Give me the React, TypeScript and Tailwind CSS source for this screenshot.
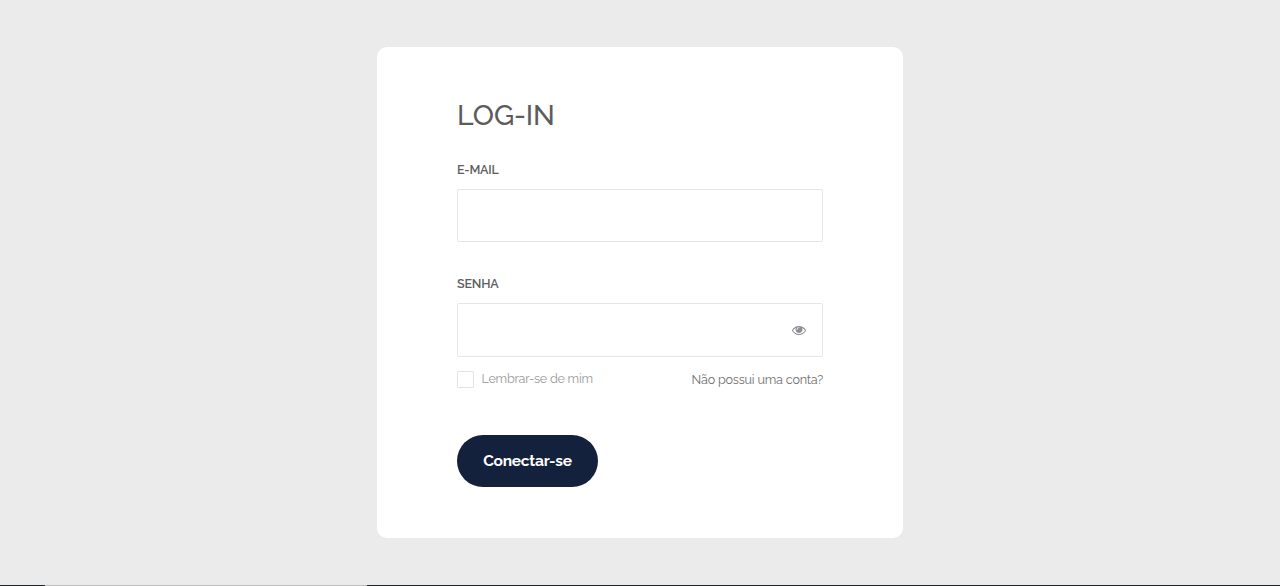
const EyeIcon = () => (
  <svg viewBox="0 0 1792 1792" className="h-3.5 w-3.5 fill-[#8c9094]" aria-hidden="true">
    <path d="M1664 960q-152-236-381-353 61 104 61 225 0 185-131.5 316.5t-316.5 131.5-316.5-131.5-131.5-316.5q0-121 61-225-229 117-381 353 133 205 333.5 326.5t434.5 121.5 434.5-121.5 333.5-326.5zm-720-384q0-20-14-34t-34-14q-125 0-214.5 89.5t-89.5 214.5q0 20 14 34t34 14 34-14 14-34q0-86 61-147t147-61q20 0 34-14t14-34zm848 384q0 34-20 69-140 230-376.5 368.5t-499.5 138.5-499.5-139-376.5-368q-20-35-20-69t20-69q140-229 376.5-368t499.5-139 499.5 139 376.5 368q20 35 20 69z" />
  </svg>
);

export default function App() {
  return (
    <div className="flex h-[586px] w-full flex-col bg-[#ebebeb] font-[Raleway,Lato,sans-serif]">
      <main className="flex flex-1 justify-center pt-[47px]">
        <form className="flex h-[491px] w-[526px] flex-col rounded-[10px] bg-white px-20 pt-[50px]">
          <h1 className="h-9 whitespace-nowrap text-[28.4px] font-medium leading-[37px] tracking-[-0.15px] text-[#5c5c5c]">LOG-IN</h1>

          <label htmlFor="email" className="mt-[27px] h-5 text-[12.5px] font-semibold leading-5 tracking-[-0.2px] text-[#606060]">
            E-MAIL
          </label>
          <input id="email" type="email" className="mt-[9px] h-[53px] w-full rounded-[2px] border border-[#e6e6e6] px-4 outline-none" />

          <label htmlFor="password" className="mt-8 h-5 text-[12.5px] font-semibold leading-5 tracking-[-0.2px] text-[#606060]">
            SENHA
          </label>
          <div className="mt-[9px] flex h-[54px] shrink-0 items-center rounded-[2px] border border-[#e6e6e6] pr-4">
            <input id="password" type="password" className="h-full min-w-0 flex-1 px-4 outline-none" />
            <EyeIcon />
          </div>

          <div className="mt-[14px] flex h-[18px] items-start justify-between text-[12.6px] leading-[18px] tracking-[-0.25px]">
            <label className="flex gap-[7.5px] text-[#999]">
              <input type="checkbox" className="h-[17px] w-[17px] appearance-none rounded-[1px] border border-[#e4e4e4]" />
              <span className="-mt-px">Lembrar-se de mim</span>
            </label>
            <a href="#" className="tracking-[-0.2px] text-[#707070]">Não possui uma conta?</a>
          </div>

          <button type="button" className="mt-[46px] h-[52px] w-[141px] rounded-full bg-[#14213d] text-[15.5px] font-bold tracking-[-0.27px] text-white">
            Conectar-se
          </button>
        </form>
      </main>
      <div className="flex h-px w-full bg-[#222528]">
        <div className="ml-[45px] h-px w-[322px] bg-[#bcbcbc]" />
      </div>
    </div>
  );
}
